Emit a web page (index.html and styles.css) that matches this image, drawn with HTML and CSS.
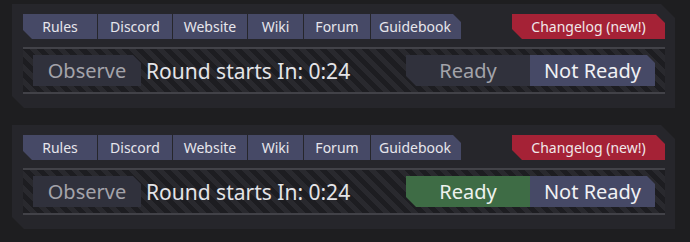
FILE: index.html
```html
<!DOCTYPE html>
<html>
<head>
<meta charset="utf-8">
<link rel="stylesheet" href="styles.css">
</head>
<body>
<div class="panel">
  <div class="topbar">
    <div class="links">
      <div class="btn rules">Rules</div>
      <div class="btn w74">Discord</div>
      <div class="btn w74">Website</div>
      <div class="btn wiki">Wiki</div>
      <div class="btn forum">Forum</div>
      <div class="btn guide">Guidebook</div>
    </div>
    <div class="btn changelog">Changelog (new!)</div>
  </div>
  <div class="divider"></div>
  <div class="stripe">
    <div class="big observe">Observe</div>
    <div class="status">Round starts In: 0:24</div>
    <div class="spacer"></div>
    <div class="big ready off">Ready</div>
    <div class="big notready">Not Ready</div>
  </div>
  <div class="divider"></div>
</div>
<div class="panel">
  <div class="topbar">
    <div class="links">
      <div class="btn rules">Rules</div>
      <div class="btn w74">Discord</div>
      <div class="btn w74">Website</div>
      <div class="btn wiki">Wiki</div>
      <div class="btn forum">Forum</div>
      <div class="btn guide">Guidebook</div>
    </div>
    <div class="btn changelog">Changelog (new!)</div>
  </div>
  <div class="divider"></div>
  <div class="stripe">
    <div class="big observe">Observe</div>
    <div class="status">Round starts In: 0:24</div>
    <div class="spacer"></div>
    <div class="big ready on">Ready</div>
    <div class="big notready">Not Ready</div>
  </div>
  <div class="divider"></div>
</div>
</body>
</html>
```
FILE: styles.css
```css
html, body {
  margin: 0;
  background: #1e1e20;
}
body {
  padding: 4px 15px 0 12px;
  font-family: "Noto Sans", "DejaVu Sans", sans-serif;
}
.panel {
  width: 663px;
  height: 104px;
  box-sizing: border-box;
  padding: 10px 10px 14px 11px;
  margin-bottom: 17px;
  background: #26262b;
  clip-path: polygon(0 0, calc(100% - 14px) 0, 100% 14px, 100% 100%, 12px 100%, 0 calc(100% - 12px));
}
.topbar {
  display: flex;
  justify-content: space-between;
  height: 25px;
}
.links {
  display: flex;
  gap: 1px;
}
.btn {
  height: 25px;
  display: flex;
  align-items: center;
  justify-content: center;
  font-size: 14px;
  color: #e6e6ec;
  background: #464966;
}
.rules {
  width: 74px;
  clip-path: polygon(0 0, 100% 0, 100% 100%, 9px 100%, 0 calc(100% - 9px));
}
.w74 { width: 74px; }
.wiki { width: 55px; }
.forum { width: 66px; }
.guide {
  width: 90px;
  padding-right: 2px;
  box-sizing: border-box;
  clip-path: polygon(0 0, calc(100% - 8px) 0, 100% 8px, 100% 100%, 0 100%);
}
.changelog {
  width: 153px;
  background: #a52236;
  color: #f0e8ea;
  clip-path: polygon(0 0, calc(100% - 9px) 0, 100% 9px, 100% 100%, 10px 100%, 0 calc(100% - 10px));
}
.divider {
  height: 2px;
  background: #424248;
}
.topbar + .divider { margin-top: 8px; }
.stripe {
  height: 43px;
  box-sizing: border-box;
  padding: 6px 10px;
  display: flex;
  align-items: center;
  background: repeating-linear-gradient(45deg, #1d1d21 0 5px, #29292e 5px 10px);
}
.big {
  height: 31px;
  display: flex;
  align-items: center;
  justify-content: center;
  font-size: 20px;
}
.observe {
  width: 108px;
  background: #30313c;
  color: #a3a3aa;
  clip-path: polygon(0 0, calc(100% - 8px) 0, 100% 8px, 100% 100%, 0 100%);
}
.status {
  margin-left: 5px;
  font-size: 21px;
  color: #e4e4e8;
}
.spacer { flex: 1; }
.ready {
  width: 124px;
  clip-path: polygon(0 0, 100% 0, 100% 100%, 10px 100%, 0 calc(100% - 10px));
}
.ready.off {
  background: #30313c;
  color: #a3a3aa;
}
.ready.on {
  background: #3e6c45;
  color: #eef2ee;
}
.notready {
  width: 125px;
  background: #464966;
  color: #f0f0f4;
  clip-path: polygon(0 0, calc(100% - 8px) 0, 100% 8px, 100% 100%, 0 100%);
}
```
